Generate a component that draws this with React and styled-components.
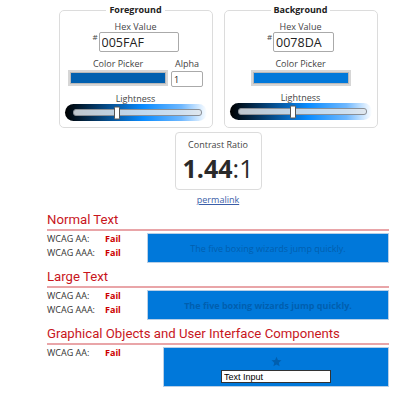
import React from 'react'
import styled, { createGlobalStyle } from 'styled-components'

const GlobalStyle = createGlobalStyle`
  body {
    margin: 0;
    background: #fff;
    font-family: "Open Sans", "DejaVu Sans", sans-serif;
    color: #333;
  }
`

const Page = styled.div`
  width: 342px;
  margin-left: 47px;
`

const ColorPanels = styled.div`
  display: flex;
  justify-content: center;
  gap: 11px;
`

const Panel = styled.fieldset`
  box-sizing: border-box;
  width: 154px;
  min-width: 0;
  margin: 3px 0 0;
  padding: 0 0 6px;
  border: 1px solid #dcdcdc;
  border-radius: 5px;
`

const PanelTitle = styled.legend`
  margin: 0 auto;
  padding: 0 3px;
  font-size: 9px;
  line-height: 14px;
  font-weight: 700;
  color: #222;
`

const Label = styled.div`
  font-size: 9px;
  line-height: 12px;
  color: #444;
  text-align: center;
  margin-top: ${p => p.$top || 0}px;
`

const HexRow = styled.div`
  display: flex;
  justify-content: center;
  align-items: flex-start;
  height: 20px;
  margin-top: -1px;
`

const Hash = styled.span`
  font-size: 8px;
  line-height: 9px;
  color: #444;
  margin-right: 1px;
`

const HexInput = styled.input`
  box-sizing: border-box;
  width: ${p => p.$width}px;
  height: 20px;
  margin: 0;
  padding: 0 2px;
  border: 1px solid #aaa;
  border-radius: 2px;
  font-family: "Open Sans", sans-serif;
  font-size: 12.5px;
  color: #222;
`

const PickerRow = styled.div`
  display: flex;
  justify-content: center;
  gap: 3px;
  margin-top: 6px;
`

const PickerCol = styled.div`
  display: flex;
  flex-direction: column;
  align-items: center;
`

const Swatch = styled.div`
  box-sizing: border-box;
  width: 100px;
  height: 16px;
  background: ${p => p.$color};
  border: 2px solid #d6d6d6;
  outline: 1px solid #b8b8b8;
  outline-offset: -3px;
`

const AlphaInput = styled.input`
  box-sizing: border-box;
  width: 32px;
  height: 16px;
  margin: 1px 0 0;
  padding: 0 2px;
  border: 1px solid #aaa;
  border-radius: 2px;
  font-family: "Open Sans", sans-serif;
  font-size: 9px;
  color: #222;
`

const Slider = styled.div`
  box-sizing: border-box;
  display: flex;
  align-items: center;
  width: 142px;
  height: 17px;
  margin: -1px auto 0;
  padding: 0 5px 0 8px;
  border-radius: 9px;
  background: linear-gradient(to right, #000 0%, ${p => p.$mid} 55%, #6fb8ff 82%, #fff 100%);
`

const Track = styled.div`
  position: relative;
  flex: 1;
  height: 5px;
  border-radius: 3px;
  border: 1px solid #8a8f96;
  background: rgba(225, 230, 236, 0.85);
`

const Thumb = styled.div`
  position: absolute;
  top: 50%;
  width: 4px;
  height: 11px;
  transform: translate(-50%, -50%);
  background: #fff;
  border: 1px solid #555;
  border-radius: 1px;
`

const ContrastBox = styled.div`
  box-sizing: border-box;
  width: 87px;
  height: 58px;
  margin: 4px auto 0;
  padding-top: 6px;
  border: 1px solid #dcdcdc;
  border-radius: 4px;
  text-align: center;
`

const Ratio = styled.div`
  margin-top: 2px;
  font-size: 25px;
  line-height: 30px;
  color: #2a2a2a;
  b { font-weight: 700; }
`

const Permalink = styled.a`
  display: block;
  margin-top: 4px;
  font-size: 9px;
  line-height: 12px;
  text-align: center;
  color: #3b5ea8;
  text-decoration: underline;
`

const SectionTitle = styled.h2`
  margin: 6px 0 0;
  padding-bottom: 1px;
  font-family: Roboto, "Liberation Sans", sans-serif;
  font-size: 13.2px;
  line-height: 16px;
  font-weight: 400;
  color: #c8161d;
  border-bottom: 2px solid #e9a5a8;
`

const ResultRow = styled.div`
  display: flex;
  margin-top: 1px;
`

const Results = styled.div`
  flex: 0 0 ${p => p.$width}px;
`

const Result = styled.div`
  display: flex;
  font-size: 9px;
  line-height: 14px;
  color: #333;
  span { width: 58px; }
  strong { color: #c00; font-weight: 700; }
`

const Sample = styled.div`
  box-sizing: border-box;
  flex: 1;
  height: ${p => p.$height}px;
  margin-top: 1px;
  display: flex;
  flex-direction: column;
  align-items: center;
  justify-content: ${p => (p.$ui ? 'flex-start' : 'center')};
  padding-top: ${p => (p.$ui ? 8 : 0)}px;
  background: #0078da;
  border: 1px solid #b9cfe6;
  color: #005faf;
  font-size: 9px;
  font-weight: ${p => (p.$large ? 700 : 400)};
`

const SampleInput = styled.input`
  box-sizing: border-box;
  width: 110px;
  height: 13px;
  margin: 3px 0 0;
  padding: 0 2px;
  border: 1px solid #333;
  background: #fff;
  font-family: "Liberation Sans", Arial, sans-serif;
  font-size: 9px;
  color: #000;
`

const Star = () => (
  <svg width="11" height="11" viewBox="0 0 24 24">
    <path fill="#005faf" d="M12 1.5l3.1 7.2 7.8.7-5.9 5.2 1.8 7.7L12 18.3l-6.8 4 1.8-7.7L1.1 9.4l7.8-.7z" />
  </svg>
)

const ColorPanel = ({ title, hex, color, mid, lightness, inputWidth, alpha }) => (
  <Panel>
    <PanelTitle>{title}</PanelTitle>
    <Label $top={4}>Hex Value</Label>
    <HexRow>
      <Hash>#</Hash>
      <HexInput $width={inputWidth} defaultValue={hex} />
    </HexRow>
    <PickerRow>
      <PickerCol>
        <Label>Color Picker</Label>
        <Swatch $color={color} />
      </PickerCol>
      {alpha && (
        <PickerCol>
          <Label>Alpha</Label>
          <AlphaInput defaultValue="1" />
        </PickerCol>
      )}
    </PickerRow>
    <Label $top={6}>Lightness</Label>
    <Slider $mid={mid}>
      <Track>
        <Thumb style={{ left: `${lightness}%` }} />
      </Track>
    </Slider>
  </Panel>
)

const sample = 'The five boxing wizards jump quickly.'

export default function App() {
  return (
    <Page>
      <GlobalStyle />
      <ColorPanels>
        <ColorPanel title="Foreground" hex="005FAF" color="#005faf" mid="#0a8cff" lightness={34} inputWidth={80} alpha />
        <ColorPanel title="Background" hex="0078DA" color="#0078da" mid="#0a8cff" lightness={43} inputWidth={61} />
      </ColorPanels>
      <ContrastBox>
        <Label>Contrast Ratio</Label>
        <Ratio><b>1.44</b>:1</Ratio>
      </ContrastBox>
      <Permalink href="#">permalink</Permalink>

      <SectionTitle>Normal Text</SectionTitle>
      <ResultRow>
        <Results $width={100}>
          <Result><span>WCAG AA:</span><strong>Fail</strong></Result>
          <Result><span>WCAG AAA:</span><strong>Fail</strong></Result>
        </Results>
        <Sample $height={30}>{sample}</Sample>
      </ResultRow>

      <SectionTitle>Large Text</SectionTitle>
      <ResultRow>
        <Results $width={100}>
          <Result><span>WCAG AA:</span><strong>Fail</strong></Result>
          <Result><span>WCAG AAA:</span><strong>Fail</strong></Result>
        </Results>
        <Sample $height={30} $large>{sample}</Sample>
      </ResultRow>

      <SectionTitle>Graphical Objects and User Interface Components</SectionTitle>
      <ResultRow>
        <Results $width={116}>
          <Result><span>WCAG AA:</span><strong>Fail</strong></Result>
        </Results>
        <Sample $height={40} $ui>
          <Star />
          <SampleInput defaultValue="Text Input" />
        </Sample>
      </ResultRow>
    </Page>
  )
}
